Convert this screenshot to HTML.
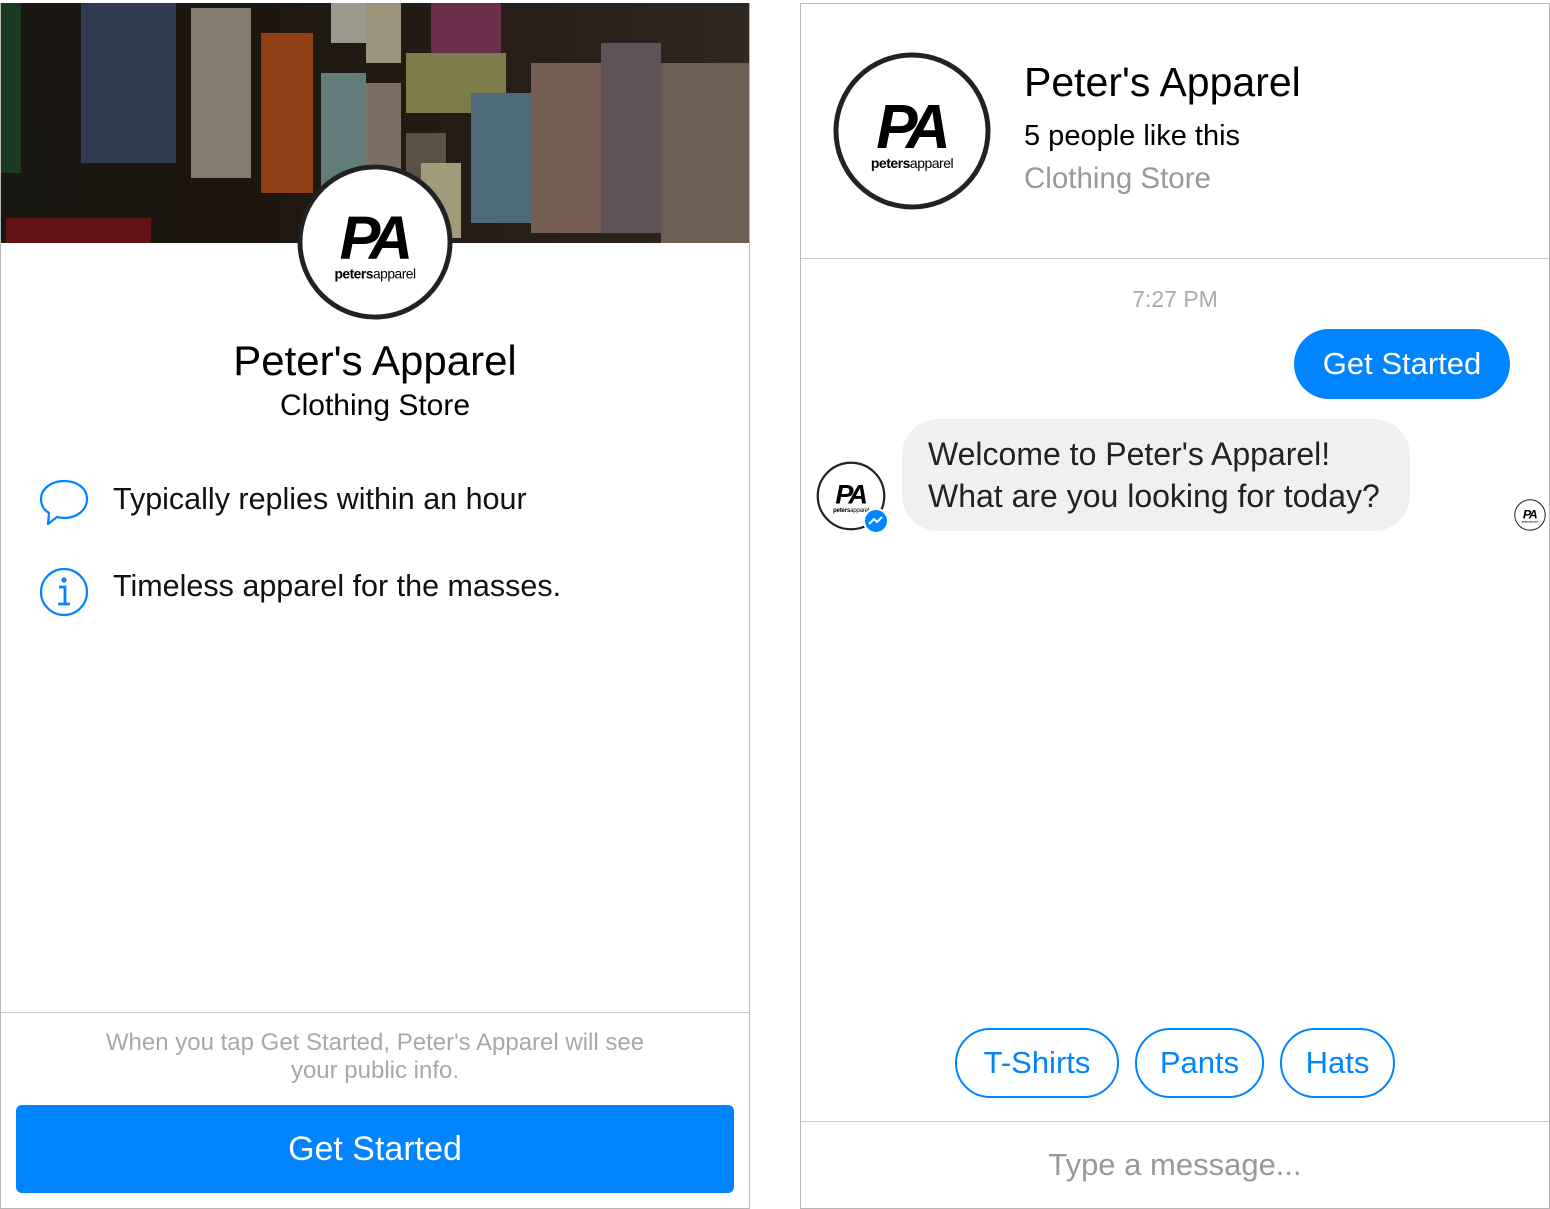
<!DOCTYPE html>
<html><head><meta charset="utf-8"><style>
*{margin:0;padding:0;box-sizing:border-box}
body{width:1550px;height:1209px;background:#fff;font-family:"Liberation Sans",sans-serif;position:relative;overflow:hidden;color:#111}
.a{position:absolute;white-space:nowrap}
.panel{position:absolute;border:1px solid #b8b8b8}
.cover{position:absolute;left:1px;top:3px;width:748px;height:240px;overflow:hidden;background:#1c1410}
.s{position:absolute}
.chip{position:absolute;top:1028px;height:70px;border:2px solid #0084ff;border-radius:35px;color:#0084ff;font-size:31px;text-align:center;line-height:66px}
</style></head><body>
<svg width="0" height="0" style="position:absolute"><defs>
<g id="logo"><circle cx="80" cy="80" r="76" fill="#fff" stroke="#222" stroke-width="5"/>
<text x="78" y="97" text-anchor="middle" font-family="Liberation Sans" font-weight="bold" font-style="italic" font-size="62" letter-spacing="-7" fill="#000">PA</text>
<text x="80" y="117" text-anchor="middle" font-family="Liberation Sans" font-size="14" fill="#000" letter-spacing="-0.5"><tspan font-weight="bold">peters</tspan>apparel</text></g>
</defs></svg>

<div class="panel" style="left:0;top:3px;width:750px;height:1206px"></div>
<div class="cover">
 <div class="s" style="left:0;top:0;width:748px;height:240px;background:linear-gradient(90deg,#1a1a14 0,#201810 30%,#2a2018 60%,#3a3028 100%)"></div>
 <div class="s" style="left:0;top:0;width:20px;height:170px;background:#1d4a28"></div>
 <div class="s" style="left:80px;top:0;width:95px;height:160px;background:#3a4a6a"></div>
 <div class="s" style="left:190px;top:5px;width:60px;height:170px;background:#a8a090"></div>
 <div class="s" style="left:260px;top:30px;width:52px;height:160px;background:#b85018"></div>
 <div class="s" style="left:320px;top:70px;width:45px;height:150px;background:#7aa0a0"></div>
 <div class="s" style="left:365px;top:80px;width:35px;height:140px;background:#a09080"></div>
 <div class="s" style="left:330px;top:0;width:40px;height:40px;background:#c8c8b8"></div>
 <div class="s" style="left:365px;top:0;width:35px;height:60px;background:#c8c0a0"></div>
 <div class="s" style="left:405px;top:130px;width:40px;height:100px;background:#706858"></div>
 <div class="s" style="left:420px;top:160px;width:40px;height:75px;background:#d0c8a0"></div>
 <div class="s" style="left:405px;top:50px;width:100px;height:60px;background:#a0a060"></div>
 <div class="s" style="left:430px;top:0;width:70px;height:50px;background:#8a3a60"></div>
 <div class="s" style="left:470px;top:90px;width:60px;height:130px;background:#608aa0"></div>
 <div class="s" style="left:530px;top:60px;width:70px;height:170px;background:#a08070;opacity:.9"></div>
 <div class="s" style="left:600px;top:40px;width:60px;height:190px;background:#7a6a70"></div>
 <div class="s" style="left:660px;top:60px;width:88px;height:180px;background:#8a7a68"></div>
 <div class="s" style="left:5px;top:215px;width:145px;height:25px;background:#7a1414"></div>
 <div class="s" style="left:0;top:0;width:748px;height:240px;background:rgba(20,15,10,.25)"></div>
</div>
<svg class="a" style="left:296px;top:163px" width="158" height="158" viewBox="0 0 160 160"><use href="#logo"/></svg>
<div class="a" style="left:0;width:750px;text-align:center;top:337px;font-size:42px;color:#000">Peter's Apparel</div>
<div class="a" style="left:0;width:750px;text-align:center;top:389px;font-size:30px;color:#000">Clothing Store</div>
<svg class="a" style="left:38px;top:478px" width="52" height="50" viewBox="0 0 52 50"><path d="M26 3C13 3 3 11 3 21c0 6 3 11 8 14l-1 11 9-7c2 0 4 1 7 1 13 0 23-8 23-19S39 3 26 3z" fill="none" stroke="#0084ff" stroke-width="2.2" stroke-linejoin="round"/></svg>
<div class="a" style="left:113px;top:482px;font-size:30.5px">Typically replies within an hour</div>
<svg class="a" style="left:38px;top:566px" width="52" height="52" viewBox="0 0 52 52"><circle cx="26" cy="26" r="23" fill="none" stroke="#0084ff" stroke-width="2.2"/><circle cx="26" cy="14" r="2.6" fill="#0084ff"/><path d="M21 21h6v16M20 38h12" fill="none" stroke="#0084ff" stroke-width="2.8"/></svg>
<div class="a" style="left:113px;top:569px;font-size:30.5px">Timeless apparel for the masses.</div>
<div class="a" style="left:1px;top:1012px;width:748px;height:1px;background:#c8c8c8"></div>
<div class="a" style="left:0;width:750px;text-align:center;top:1029px;font-size:24px;color:#a8a8a8;line-height:28px;white-space:normal">When you tap Get Started, Peter's Apparel will see<br>your public info.</div>
<div class="a" style="left:16px;top:1105px;width:718px;height:88px;background:#0084ff;border-radius:6px;color:#fff;font-size:34px;text-align:center;line-height:88px">Get Started</div>

<div class="panel" style="left:800px;top:3px;width:750px;height:1206px"></div>
<svg class="a" style="left:832px;top:51px" width="160" height="160" viewBox="0 0 160 160"><use href="#logo"/></svg>
<div class="a" style="left:1024px;top:59px;font-size:41px;color:#000">Peter's Apparel</div>
<div class="a" style="left:1024px;top:120px;font-size:29px;color:#000">5 people like this</div>
<div class="a" style="left:1024px;top:162px;font-size:29.5px;color:#999">Clothing Store</div>
<div class="a" style="left:801px;top:258px;width:748px;height:1px;background:#c8c8c8"></div>
<div class="a" style="left:800px;width:750px;text-align:center;top:286px;font-size:23px;color:#aaa">7:27 PM</div>
<div class="a" style="left:1294px;top:329px;width:216px;height:70px;background:#0084ff;border-radius:35px;color:#fff;font-size:31px;text-align:center;line-height:70px">Get Started</div>
<svg class="a" style="left:816px;top:461px" width="70" height="70" viewBox="0 0 160 160"><use href="#logo"/></svg>
<svg class="a" style="left:863px;top:508px" width="26" height="26" viewBox="0 0 26 26"><circle cx="13" cy="13" r="12" fill="#0084ff" stroke="#fff" stroke-width="2"/><path d="M6 16l5-5 3 3 5-5" fill="none" stroke="#fff" stroke-width="2" stroke-linejoin="round"/></svg>
<div class="a" style="left:902px;top:419px;width:508px;height:112px;background:#f0f0f0;border-radius:36px"></div>
<div class="a" style="left:928px;top:433px;font-size:32px;line-height:42px;color:#222">Welcome to Peter's Apparel!<br>What are you looking for today?</div>
<svg class="a" style="left:1514px;top:499px" width="32" height="32" viewBox="0 0 160 160"><use href="#logo"/></svg>
<div class="chip" style="left:955px;width:164px">T-Shirts</div>
<div class="chip" style="left:1135px;width:129px">Pants</div>
<div class="chip" style="left:1280px;width:115px">Hats</div>
<div class="a" style="left:801px;top:1121px;width:748px;height:1px;background:#c8c8c8"></div>
<div class="a" style="left:800px;width:750px;text-align:center;top:1147px;font-size:31px;color:#999">Type a message...</div>
</body></html>
